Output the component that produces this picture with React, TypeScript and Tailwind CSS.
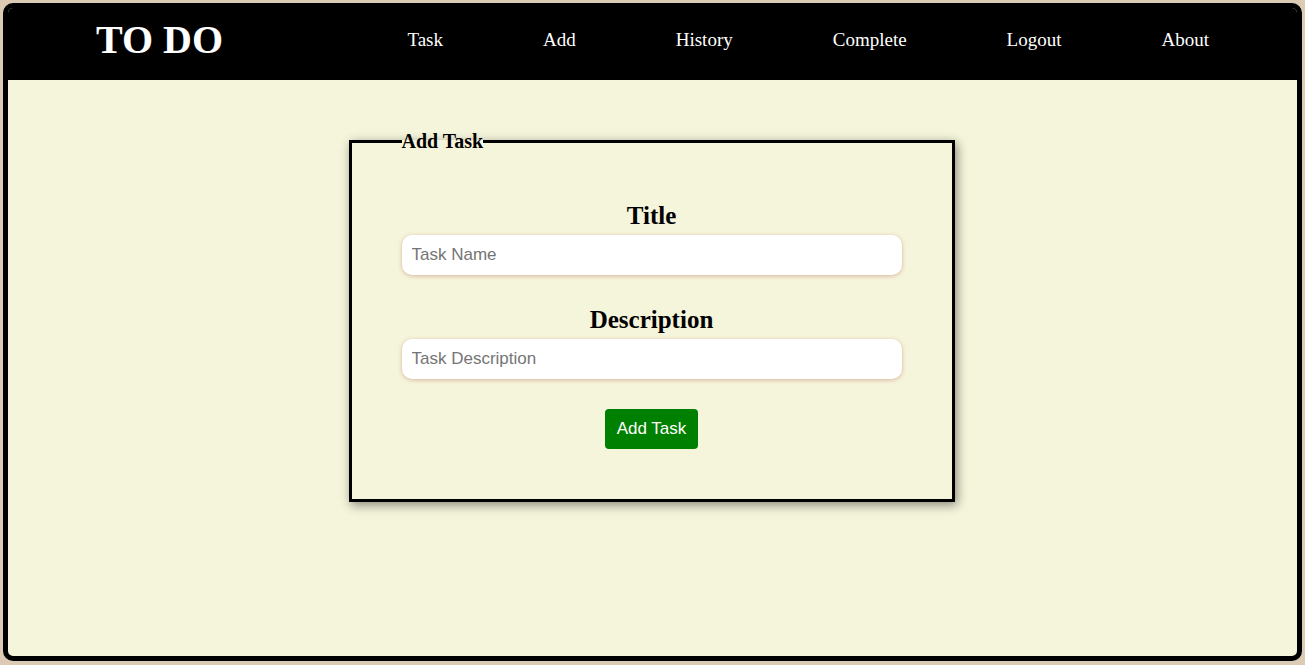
import React from "react";

const navItems = ["Task", "Add", "History", "Complete", "Logout", "About"];

export default function App() {
  return (
    <div className="min-h-[665px] bg-[#dbcab4] pt-[3px] px-[3px] pb-[4px] font-['Liberation_Serif',serif]">
      {/* Frame */}
      <div className="h-[658px] rounded-[10px] border-[5px] border-black bg-[#f5f5dc] overflow-hidden flex flex-col">
        {/* Header */}
        <header className="h-[72px] shrink-0 bg-black flex items-center justify-between px-[88px] pb-[8px]">
          <h1 className="text-[40px] font-bold text-white leading-none">TO DO</h1>
          <nav className="flex items-center gap-[100px]">
            {navItems.map((item) => (
              <a key={item} href="#" className="text-[19px] text-white">
                {item}
              </a>
            ))}
          </nav>
        </header>

        {/* Add task form */}
        <main className="flex-1 flex justify-center">
          <fieldset className="mt-[50px] self-start w-[606px] -translate-x-px border-[3px] border-black p-[50px] shadow-[2px_3px_10px_rgba(0,0,0,0.45)]">
            <legend className="text-[20px] font-bold text-black leading-[22px]">Add Task</legend>

            <label className="block text-center text-[25px] font-bold leading-[28px] mb-[5px]">Title</label>
            <input
              type="text"
              placeholder="Task Name"
              className="block w-full h-[40px] rounded-[10px] bg-white px-[10px] text-[17px] font-['Liberation_Sans',sans-serif] placeholder:text-[#757575] outline-none shadow-[0_1px_4px_rgba(200,135,115,0.6)] mb-[31px]"
            />

            <label className="block text-center text-[25px] font-bold leading-[28px] mb-[5px]">Description</label>
            <input
              type="text"
              placeholder="Task Description"
              className="block w-full h-[40px] rounded-[10px] bg-white px-[10px] text-[17px] font-['Liberation_Sans',sans-serif] placeholder:text-[#757575] outline-none shadow-[0_1px_4px_rgba(200,135,115,0.6)] mb-[30px]"
            />

            <div className="flex justify-center">
              <button className="h-[40px] px-[12px] rounded-[4px] bg-[#008000] text-white text-[17px] font-['Liberation_Sans',sans-serif]">
                Add Task
              </button>
            </div>
          </fieldset>
        </main>
      </div>
    </div>
  );
}
